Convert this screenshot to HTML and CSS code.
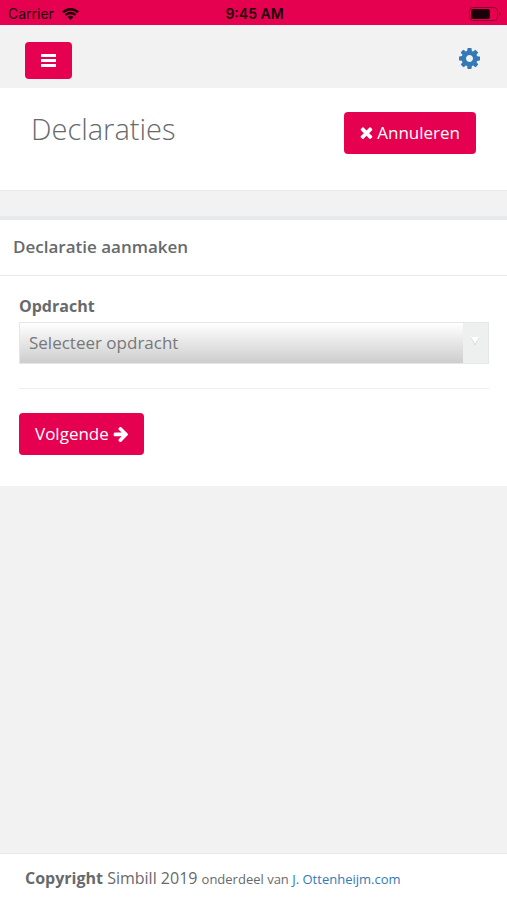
FILE: index.html
```html
<!DOCTYPE html>
<html lang="nl">
<head>
<meta charset="utf-8">
<meta name="viewport" content="width=device-width, initial-scale=1">
<title>Declaraties</title>
<link rel="stylesheet" href="styles.css">
</head>
<body>
<div class="status">
  <div class="status-carrier">
    <span>Carrier</span>
    <svg class="wifi" viewBox="0 0 17 12" aria-hidden="true">
      <path d="M1 4.300a10.600 10.600 0 0 1 15 0M3.600 7a6.900 6.900 0 0 1 9.800 0" fill="none" stroke="currentColor" stroke-width="2.400"/>
      <path d="M5.600 9.100a4.100 4.100 0 0 1 5.800 0L8.500 12z" fill="currentColor"/>
    </svg>
  </div>
  <strong class="status-time">9:45 AM</strong>
  <svg class="battery" viewBox="0 0 32 14" aria-hidden="true">
    <rect x="0.500" y="0.500" width="28" height="13" rx="3.500" fill="none" stroke="currentColor" stroke-opacity=".4"/>
    <rect x="2" y="2" width="19" height="10" rx="2" fill="currentColor"/>
    <path d="M30 5v4q1.500-.5 1.500-2T30 5z" fill="currentColor" fill-opacity=".5"/>
  </svg>
</div>
<nav class="topbar">
  <button class="btn btn-menu" type="button" aria-label="Menu">
    <svg class="icon-bars" viewBox="0 0 15 13" aria-hidden="true"><path d="M0 0h15v3H0zM0 5h15v3H0zM0 10h15v3H0z" fill="currentColor"/></svg>
  </button>
  <a class="settings" href="#" aria-label="Instellingen">
    <svg class="icon-cog" viewBox="128 128 1536 1536" aria-hidden="true"><path fill="currentColor" d="M1152 896q0-106-75-181t-181-75-181 75-75 181 75 181 181 75 181-75 75-181zm512-109v222q0 12-8 23t-20 13l-185 28q-19 54-39 91 35 50 107 138 10 12 10 25t-9 23q-27 37-99 108t-94 71q-12 0-26-9l-138-108q-44 23-91 38-16 136-29 186-7 28-36 28h-222q-14 0-24.500-8.500t-11.500-21.500l-28-184q-49-16-90-37l-141 107q-10 9-25 9-14 0-25-11-126-114-165-168-7-10-7-23 0-12 8-23 15-21 51-66.500t54-70.500q-27-50-41-99l-183-27q-13-2-21-12.500t-8-23.500v-222q0-12 8-23t19-13l186-28q14-46 39-92-40-57-107-138-10-12-10-24 0-10 9-23 26-36 98.500-107.500t94.500-71.500q13 0 26 10l138 107q44-23 91-38 16-136 29-186 7-28 36-28h222q14 0 24.500 8.500t11.500 21.500l28 184q49 16 90 37l142-107q9-9 24-9 13 0 25 10 129 119 165 170 7 8 7 22 0 12-8 23-15 21-51 66.500t-54 70.500q26 50 41 98l183 28q13 2 21 12.500t8 23.500z"/></svg>
  </a>
</nav>
<header class="heading">
  <h1>Declaraties</h1>
  <button class="btn" type="button">
    <svg class="icon-times" viewBox="302 334 1188 1220" aria-hidden="true"><path fill="currentColor" d="M1490 1322q0 40-28 68l-136 136q-28 28-68 28t-68-28l-294-294-294 294q-28 28-68 28t-68-28l-136-136q-28-28-28-68t28-68l294-294-294-294q-28-28-28-68t28-68l136-136q28-28 68-28t68 28l294 294 294-294q28-28 68-28t68 28l136 136q28 28 28 68t-28 68l-294 294 294 294q28 28 28 68z"/></svg>
    Annuleren
  </button>
</header>
<main>
  <section class="panel">
    <h2>Declaratie aanmaken</h2>
    <form class="panel-body">
      <label for="opdracht">Opdracht</label>
      <div class="select">
        <select id="opdracht"><option>Selecteer opdracht</option></select>
        <svg class="caret" viewBox="0 0 10 10" aria-hidden="true"><path d="M1 2h8L5 9.500z" fill="#d2d4d4"/><path d="M1 1h8L5 8z" fill="#fff"/></svg>
      </div>
      <hr>
      <button class="btn" type="button">
        Volgende
        <svg class="icon-arrow" viewBox="64 189 1536 1550" aria-hidden="true"><path fill="currentColor" d="M1600 960q0 54-37 91l-651 651q-39 37-91 37-51 0-90-37l-75-75q-38-38-38-91t38-91l293-293h-704q-52 0-84.500-37.500t-32.500-90.500v-128q0-53 32.500-90.500t84.500-37.500h704l-293-294q-38-36-38-90t38-90l75-75q38-38 90-38 53 0 91 38l651 651q37 35 37 90z"/></svg>
      </button>
    </form>
  </section>
</main>
<footer class="footer"><strong>Copyright</strong> Simbill 2019 <small>onderdeel van <a href="#">J. Ottenheijm.com</a></small></footer>
</body>
</html>
```
FILE: styles.css
```css
* {
  box-sizing: border-box;
}

body {
  margin: 0;
  min-height: 100vh;
  display: flex;
  flex-direction: column;
  background: #f2f2f2;
  color: #676a6c;
  font-family: "Open Sans", sans-serif;
  font-size: 16px;
  line-height: 24px;
}

.status {
  display: grid;
  grid-template-columns: 1fr auto 1fr;
  align-items: center;
  height: 25px;
  padding: 2px 6px 0 8px;
  background: #e60050;
  color: #1c000a;
  font-family: Inter, sans-serif;
  font-size: 14px;
}

.status-carrier {
  display: flex;
  align-items: center;
  gap: 8px;
}

.status-time {
  font-weight: 600;
}

.wifi {
  width: 17px;
  height: 12px;
}

.battery {
  width: 32px;
  height: 14px;
  justify-self: end;
}

.topbar {
  display: flex;
  align-items: flex-start;
  justify-content: space-between;
  height: 63px;
  padding: 17px 27px 0 25px;
}

.btn {
  display: inline-flex;
  align-items: center;
  gap: 4px;
  height: 42px;
  padding: 0 16px;
  border: 0;
  border-radius: 4px;
  background: #e60050;
  color: #fff;
  font: inherit;
  font-size: 17px;
}

.btn-menu {
  justify-content: center;
  width: 47px;
  height: 37px;
}

.settings {
  display: flex;
  padding-top: 6px;
  color: #337ab7;
}

.icon-bars {
  width: 15px;
  height: 13px;
}

.icon-cog {
  width: 21px;
  height: 21px;
}

.icon-times {
  width: 13px;
  height: 12px;
}

.icon-arrow {
  width: 15px;
  height: 15px;
}

.heading {
  display: flex;
  align-items: flex-start;
  justify-content: space-between;
  height: 103px;
  padding: 24px 31px 0;
  border-bottom: 1px solid #e7eaec;
  background: #fff;
}

h1 {
  margin: 0;
  font-size: 29px;
  font-weight: 300;
  line-height: 34px;
}

main {
  flex: 1;
  padding-top: 25px;
}

.panel {
  border-top: 4px solid #e7eaec;
  background: #fff;
}

h2 {
  margin: 0;
  padding: 15px 13px 16px;
  border-bottom: 1px solid #e7eaec;
  font-size: 17px;
  font-weight: 600;
  line-height: 24px;
}

.panel-body {
  padding: 18px 18px 31px 19px;
}

label {
  display: block;
  padding-bottom: 4px;
  font-weight: 700;
}

.select {
  position: relative;
}

select {
  display: block;
  width: 100%;
  height: 42px;
  padding: 0 36px 0 9px;
  appearance: none;
  border: 1px solid #e5e6e7;
  border-radius: 0;
  background:
    linear-gradient(#eeefef, #eeefef) right / 25px 100% no-repeat,
    linear-gradient(#fff, #cdcdcd);
  color: #76787a;
  font: inherit;
  font-size: 17px;
}

.caret {
  position: absolute;
  top: 14px;
  right: 9px;
  width: 10px;
  height: 10px;
  pointer-events: none;
}

hr {
  margin: 24px 0;
  border: 0;
  border-top: 1px solid #eee;
}

.footer {
  height: 47px;
  padding: 12px 25px;
  border-top: 1px solid #e7eaec;
  background: #fff;
}

small {
  font-size: 13px;
}

small a {
  color: #337ab7;
  text-decoration: none;
}
```
